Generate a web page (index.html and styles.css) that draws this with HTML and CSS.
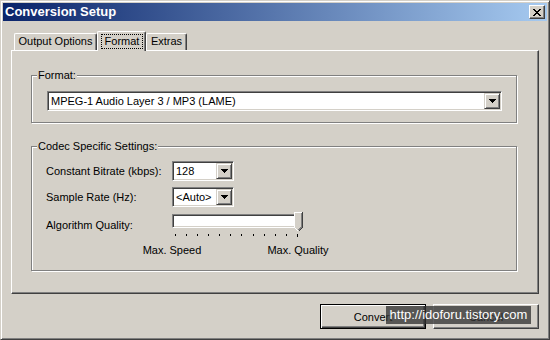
FILE: index.html
```html
<!DOCTYPE html>
<html lang="en">
    <head>
        <meta charset="UTF-8" />
        <title>Conversion Setup</title>
        <link rel="stylesheet" href="styles.css">
    </head>
    <body>
        <div class="window">
            <div class="titlebar">
                <span class="title">Conversion Setup</span>
                <span class="close-btn">
                    <svg width="8" height="7" viewBox="0 0 8 7" shape-rendering="crispEdges">
                        <path fill="#000" d="M0 0h2v1H0z M6 0h2v1H6z M1 1h2v1H1z M5 1h2v1H5z M2 2h4v1H2z M3 3h2v1H3z M2 4h4v1H2z M1 5h2v1H1z M5 5h2v1H5z M0 6h2v1H0z M6 6h2v1H6z"/>
                    </svg>
                </span>
            </div>

            <div class="client">
                <div class="tabs">
                    <div class="tab tab-output">Output Options</div>
                    <div class="tab tab-format active"><span class="focus">Format</span></div>
                    <div class="tab tab-extras">Extras</div>
                </div>

                <div class="panel">
                    <div class="group group-format">
                        <span class="group-title">Format:</span>
                        <div class="combo combo-wide">
                            <span class="combo-text">MPEG-1 Audio Layer 3 / MP3 (LAME)</span>
                            <span class="combo-btn">
                                <svg width="7" height="4" viewBox="0 0 7 4" shape-rendering="crispEdges">
                                    <path fill="#000" d="M0 0h7v1H0z M1 1h5v1H1z M2 2h3v1H2z M3 3h1v1H3z"/>
                                </svg>
                            </span>
                        </div>
                    </div>

                    <div class="group group-codec">
                        <span class="group-title">Codec Specific Settings:</span>

                        <div class="field">
                            <label>Constant Bitrate (kbps):</label>
                            <div class="combo combo-small">
                                <span class="combo-text">128</span>
                                <span class="combo-btn">
                                    <svg width="7" height="4" viewBox="0 0 7 4" shape-rendering="crispEdges">
                                        <path fill="#000" d="M0 0h7v1H0z M1 1h5v1H1z M2 2h3v1H2z M3 3h1v1H3z"/>
                                    </svg>
                                </span>
                            </div>
                        </div>

                        <div class="field">
                            <label>Sample Rate (Hz):</label>
                            <div class="combo combo-small">
                                <span class="combo-text">&lt;Auto&gt;</span>
                                <span class="combo-btn">
                                    <svg width="7" height="4" viewBox="0 0 7 4" shape-rendering="crispEdges">
                                        <path fill="#000" d="M0 0h7v1H0z M1 1h5v1H1z M2 2h3v1H2z M3 3h1v1H3z"/>
                                    </svg>
                                </span>
                            </div>
                        </div>

                        <div class="field field-slider">
                            <label>Algorithm Quality:</label>
                            <div class="slider">
                                <div class="track"></div>
                                <span class="thumb">
                                    <svg width="9" height="20" viewBox="0 0 9 20" shape-rendering="crispEdges">
                                        <path fill="#d4d0c8" d="M0 0H9V15L4.5 19.5L0 15Z"/>
                                        <path fill="none" stroke="#fff" d="M0.5 15V0.5H8"/>
                                        <path fill="none" stroke="#404040" d="M8.5 0V15.5L4.5 19.5"/>
                                        <path fill="none" stroke="#808080" d="M7.5 1V15L4.5 18"/>
                                        <path fill="none" stroke="#fff" d="M0.5 15.5L4 19"/>
                                    </svg>
                                </span>
                                <div class="ticks">
                                    <i></i><i></i><i></i><i></i><i></i><i></i>
                                    <i></i><i></i><i></i><i></i><i></i><i class="last"></i>
                                </div>
                            </div>
                        </div>

                        <div class="captions">
                            <span>Max. Speed</span>
                            <span>Max. Quality</span>
                        </div>
                    </div>
                </div>

                <div class="buttons">
                    <button class="btn default">Convert</button>
                    <button class="btn">Cancel</button>
                </div>
            </div>

            <div class="watermark">http://idoforu.tistory.com</div>
        </div>
    </body>
</html>
```

FILE: styles.css
```css
body {
  margin: 0;
  font-family: "Liberation Sans", Arial, sans-serif;
  font-size: 11px;
  color: #000;
}

.window {
  position: relative;
  width: 550px;
  height: 340px;
  box-sizing: border-box;
  background-color: #d4d0c8;
  border: 1px solid;
  border-color: #d4d0c8 #404040 #404040 #d4d0c8;
  box-shadow: inset 1px 1px 0 #fff, inset -1px -1px 0 #808080;
  padding: 2px;
  display: flex;
  flex-direction: column;
}

/* barra de titulo */
.titlebar {
  height: 18px;
  flex: none;
  display: flex;
  align-items: center;
  justify-content: space-between;
  padding: 0 2px;
  background: linear-gradient(to right, #0a246a, #a6caf0);
}

.title {
  color: #fff;
  font-weight: bold;
  font-size: 13px;
  line-height: 18px;
}

.close-btn {
  width: 16px;
  height: 14px;
  box-sizing: border-box;
  display: flex;
  align-items: center;
  justify-content: center;
  background-color: #d4d0c8;
  border: 1px solid;
  border-color: #fff #404040 #404040 #fff;
  box-shadow: inset -1px -1px 0 #808080;
  padding-right: 1px;
}

.close-btn svg {
  display: block;
}

.client {
  flex: 1;
  padding: 10px 8px 0 8px;
}

/* abas */
.tabs {
  display: flex;
  align-items: flex-start;
  height: 19px;
  padding-left: 3px;
  position: relative;
  z-index: 1;
}

.tab {
  box-sizing: border-box;
  height: 17px;
  margin-top: 2px;
  line-height: 15px;
  text-align: center;
  background-color: #d4d0c8;
  border-top: 1px solid #fff;
  border-left: 1px solid #fff;
  border-right: 1px solid #404040;
  box-shadow: inset -1px 0 0 #808080;
  border-radius: 2px 2px 0 0;
}

.tab-output {
  width: 83px;
}

.tab-format {
  width: 49px;
}

.tab-extras {
  width: 41px;
}

.tab.active {
  height: 20px;
  margin-top: 0;
  padding: 2px 2px 0 3px;
}

.focus {
  display: block;
  height: 15px;
  box-sizing: border-box;
  border: 1px dotted #000;
  line-height: 13px;
}

/* painel */
.panel {
  height: 244px;
  box-sizing: border-box;
  border: 1px solid;
  border-color: #fff #404040 #404040 #fff;
  box-shadow: inset -1px -1px 0 #808080;
  padding: 24px 21px 0 19px;
}

.group {
  position: relative;
  border: 1px solid #808080;
  box-shadow: 1px 1px 0 #fff, inset 1px 1px 0 #fff;
}

.group-title {
  position: absolute;
  top: -7px;
  left: 5px;
  padding: 0 1px;
  line-height: 13px;
  background-color: #d4d0c8;
}

.group-format {
  padding: 15px 14px 11px 15px;
}

.group-codec {
  margin-top: 23px;
  height: 125px;
  box-sizing: border-box;
  padding: 14px 0 0 14px;
}

/* combos */
.combo {
  display: flex;
  height: 20px;
  box-sizing: border-box;
  background-color: #fff;
  border: 1px solid;
  border-color: #808080 #fff #fff #808080;
  box-shadow: inset 1px 1px 0 #404040, inset -1px -1px 0 #d4d0c8;
  padding: 1px;
}

.combo-small {
  width: 62px;
}

.combo-text {
  flex: 1;
  line-height: 16px;
  padding-left: 2px;
  white-space: nowrap;
  overflow: hidden;
}

.combo-btn {
  width: 16px;
  height: 16px;
  box-sizing: border-box;
  display: flex;
  align-items: center;
  justify-content: center;
  background-color: #d4d0c8;
  border: 1px solid;
  border-color: #d4d0c8 #404040 #404040 #d4d0c8;
  box-shadow: inset 1px 1px 0 #fff, inset -1px -1px 0 #808080;
}

.combo-btn svg {
  display: block;
}

/* campos */
.field {
  display: flex;
  align-items: center;
  height: 20px;
  margin-bottom: 6px;
}

.field label {
  width: 126px;
}

.field-slider {
  align-items: flex-start;
  height: 24px;
  margin-bottom: 0;
}

.field-slider label {
  margin-top: 6px;
}

.slider {
  position: relative;
  width: 130px;
  padding-top: 1px;
}

.track {
  width: 126px;
  height: 14px;
  box-sizing: border-box;
  background-color: #fff;
  border: 1px solid;
  border-color: #808080 #fff #fff #808080;
  box-shadow: inset 1px 1px 0 #404040, inset -1px -1px 0 #d4d0c8;
}

.thumb {
  position: absolute;
  left: 122px;
  top: -1px;
}

.thumb svg {
  display: block;
}

.ticks {
  display: flex;
  justify-content: space-between;
  align-items: flex-start;
  width: 123px;
  margin: 6px 0 0 3px;
}

.ticks i {
  display: block;
  width: 1px;
  height: 2px;
  background-color: #000;
}

.ticks i.last {
  height: 3px;
}

.captions {
  display: flex;
  gap: 6px;
  padding-left: 66px;
  margin-top: 7px;
}

.captions span {
  width: 120px;
  text-align: center;
  line-height: 13px;
}

/* botoes */
.buttons {
  display: flex;
  justify-content: flex-end;
  gap: 7px;
  padding-top: 10px;
}

.btn {
  width: 106px;
  height: 25px;
  box-sizing: border-box;
  margin: 0;
  padding: 0;
  font-family: inherit;
  font-size: 11px;
  color: #000;
  background-color: #d4d0c8;
  border: 1px solid;
  border-color: #fff #404040 #404040 #fff;
  box-shadow: inset -1px -1px 0 #808080;
}

.btn.default {
  border: 1px solid #000;
  box-shadow: inset 1px 1px 0 #fff, inset -1px -1px 0 #404040, inset -2px -2px 0 #808080;
}

.watermark {
  position: absolute;
  left: 385px;
  top: 305px;
  width: 145px;
  height: 18px;
  line-height: 18px;
  text-align: center;
  font-size: 13px;
  color: #fff;
  background-color: rgba(50, 50, 50, 0.77);
}
```
